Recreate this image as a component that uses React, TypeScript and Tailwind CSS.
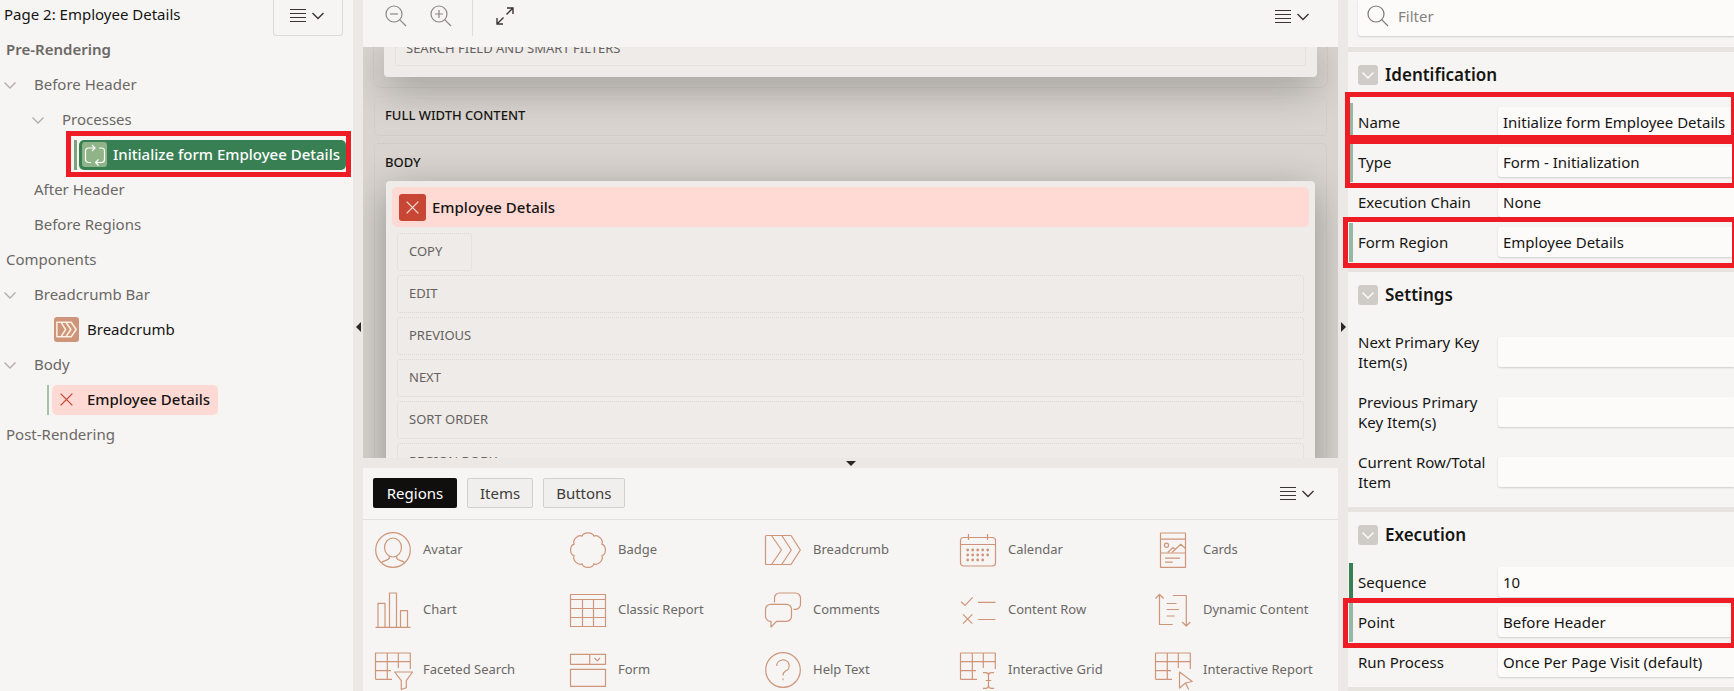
import { ReactNode } from "react";

type IconProps = { className?: string };

function MenuIcon() {
  return (
    <svg className="h-4 w-9" viewBox="0 0 36 16" fill="none" stroke="#3a3632" aria-hidden="true">
      <path d="M0 2.5H16M0 6.5H16M0 10.5H16M0 14.5H16" />
      <path d="M22.5 6L28 11.5L33.5 6" strokeWidth="1.4" />
    </svg>
  );
}

function Chevron({ className = "" }: IconProps) {
  return (
    <svg className={`h-3 w-3 ${className}`} viewBox="0 0 12 12" fill="none" stroke="currentColor" strokeWidth="1.3" aria-hidden="true">
      <path d="M.5 3.5L6 9L11.5 3.5" />
    </svg>
  );
}

function Magnifier({ sign = "" }: { sign?: string }) {
  return (
    <svg className="h-6 w-6" viewBox="0 0 24 24" fill="none" stroke="currentColor" strokeWidth="1.2" aria-hidden="true">
      <circle cx="10" cy="10" r="8" />
      <path d="M15.7 15.7L22 22" />
      {sign && <path d={sign} />}
    </svg>
  );
}

function Cross({ className = "" }: IconProps) {
  return (
    <svg className={className} viewBox="0 0 14 14" fill="none" stroke="currentColor" strokeWidth="1.4" aria-hidden="true">
      <path d="M.7 .7L13.3 13.3M13.3 .7L.7 13.3" />
    </svg>
  );
}

/* Tree */

type TreeNode = {
  label: string;
  indent: string;
  expandable?: boolean;
  kind?: "process" | "breadcrumb" | "invalid";
  className?: string;
};

const tree: TreeNode[] = [
  { label: "Pre-Rendering", indent: "pl-1.5", className: "font-semibold" },
  { label: "Before Header", indent: "pl-1", expandable: true },
  { label: "Processes", indent: "pl-8", expandable: true },
  { label: "Initialize form Employee Details", indent: "pl-[74px]", kind: "process" },
  { label: "After Header", indent: "pl-[34px]" },
  { label: "Before Regions", indent: "pl-[34px]" },
  { label: "Components", indent: "pl-1.5" },
  { label: "Breadcrumb Bar", indent: "pl-1", expandable: true },
  { label: "Breadcrumb", indent: "pl-[54px]", kind: "breadcrumb" },
  { label: "Body", indent: "pl-1", expandable: true },
  { label: "Employee Details", indent: "pl-[47px]", kind: "invalid" },
  { label: "Post-Rendering", indent: "pl-1.5" },
];

function TreeLabel({ node }: { node: TreeNode }) {
  if (node.kind === "process") {
    return (
      <>
        <span className="mr-0.5 h-[30px] w-[3px] shrink-0 bg-[#7ba37c]" />
        <button className="flex h-[30px] items-center gap-1.5 rounded-[5px] bg-[#387f54] pl-[3px] pr-1.5 font-medium text-white">
          <span className="flex h-[25px] w-[25px] shrink-0 items-center justify-center rounded-[3px] bg-[#8fb488]">
            <svg className="h-[22px] w-[22px]" viewBox="0 0 22 22" fill="none" stroke="#fff" strokeWidth="1.2" aria-hidden="true">
              <path d="M7 18.5H4.5A3 3 0 0 1 1.5 15.5V7A3 3 0 0 1 4.5 4H10.5M8 1L11 4L8 7" />
              <path d="M15 4H17.5A3 3 0 0 1 20.5 7V15.5A3 3 0 0 1 17.5 18.5H12M14.5 15.5L11.5 18.5L14.5 21.5" />
            </svg>
          </span>
          {node.label}
        </button>
        <span className="pointer-events-none absolute -bottom-[5px] -top-[6px] left-[66px] right-0.5 border-[5px] border-[#ee1c25]" />
      </>
    );
  }
  if (node.kind === "breadcrumb") {
    return (
      <button className="flex items-center gap-2 text-[#161513]">
        <span className="flex h-[25px] w-[25px] items-center justify-center rounded-[3px] bg-[#ce957b]">
          <svg className="h-[21px] w-[21px]" viewBox="0 0 36 36" fill="none" stroke="#faf0e0" strokeWidth="2.6" strokeLinejoin="round" aria-hidden="true">
            <path d="M1.5 5.5H26L34.5 18L26 30.5H1.5ZM8.5 5.5L16.5 18L8.5 30.5M17 5.5L25.5 18L17 30.5" />
          </svg>
        </span>
        {node.label}
      </button>
    );
  }
  if (node.kind === "invalid") {
    return (
      <>
        <span className="mr-[3px] h-[30px] w-0.5 shrink-0 bg-[#a5c2a3]" />
        <button className="flex h-[30px] items-center gap-[14px] rounded-[5px] bg-[#ffd9d3] px-2 font-medium text-[#161513]">
          <Cross className="h-[13px] w-[13px] text-[#c74634]" />
          {node.label}
        </button>
      </>
    );
  }
  return (
    <button className={`flex items-center ${node.expandable ? "gap-[18px]" : ""} ${node.className ?? ""}`}>
      {node.expandable && <Chevron className="text-[#b0ada9]" />}
      {node.label}
    </button>
  );
}

function TreePanel() {
  return (
    <aside className="w-[353px] shrink-0 overflow-hidden bg-[#f6f5f3]">
      <header className="flex h-8 items-start justify-between pl-1 pr-[10px]">
        <h1 className="pt-1 leading-5 text-[#161513]">Page 2: Employee Details</h1>
        <button
          aria-label="Page menu"
          className="flex h-9 w-[70px] shrink-0 items-center justify-center rounded-b-[3px] border border-t-0 border-[#dcdad7] pb-1.5"
        >
          <MenuIcon />
        </button>
      </header>
      <ul className="text-[#6b6865]">
        {tree.map((node) => (
          <li key={node.label} className={`relative flex h-[35px] items-center whitespace-nowrap ${node.indent}`}>
            <TreeLabel node={node} />
          </li>
        ))}
      </ul>
    </aside>
  );
}

/* Layout canvas */

function Slot({ label, className = "" }: { label: string; className?: string }) {
  return (
    <div className={`flex h-[38px] shrink-0 items-center rounded-[3px] border border-dotted border-[#dbd8d5] pl-[11px] text-[13px] text-[#65625f] ${className}`}>
      {label}
    </div>
  );
}

function Canvas() {
  return (
    <div className="flex min-h-0 flex-1 flex-col overflow-hidden bg-[#d9d4cf] px-[10px]">
      <div className="shrink-0 rounded-b-lg border border-t-0 border-dotted border-[#c9c5c0] px-[10px] pb-[10px]">
        <div className="h-[30px] rounded-b-[4px] bg-[#efebe8] px-[11px] shadow-[0_10px_40px_rgba(0,0,0,0.32)]">
          <div className="flex h-[19px] flex-col justify-end overflow-hidden rounded-b-[3px] border border-t-0 border-dotted border-[#dbd8d5] pb-1.5 pl-[10px] text-[13px] leading-[22px] text-[#65625f]">
            SEARCH FIELD AND SMART FILTERS
          </div>
        </div>
      </div>
      <section className="mx-px mt-2 flex h-10 shrink-0 items-center rounded-[5px] border border-dotted border-[#c9c5c0] pl-[10px] text-[13px] font-medium text-[#161513]">
        FULL WIDTH CONTENT
      </section>
      <section className="mx-px mt-[7px] rounded-t-[5px] border border-b-0 border-dotted border-[#c9c5c0] px-[11px]">
        <h2 className="-ml-px flex h-[37px] items-center text-[13px] font-medium text-[#161513]">BODY</h2>
        <div className="flex flex-col rounded-t-[4px] bg-[#efebe8] p-1.5 shadow-[0_10px_40px_rgba(0,0,0,0.32)]">
          <div className="flex h-10 items-center gap-1.5 rounded-[5px] bg-[#ffd9d3] pl-[7px] font-medium text-[#161513]">
            <span className="flex h-[27px] w-[27px] items-center justify-center rounded-[3px] bg-[#c74634]">
              <Cross className="h-[13px] w-[13px] text-[#ffdcd6]" />
            </span>
            Employee Details
          </div>
          <div className="mt-1.5 flex flex-col gap-1 px-[5px]">
            <Slot label="COPY" className="w-[75px]" />
            <Slot label="EDIT" />
            <Slot label="PREVIOUS" />
            <Slot label="NEXT" />
            <Slot label="SORT ORDER" />
            <Slot label="REGION BODY" />
          </div>
        </div>
      </section>
    </div>
  );
}

/* Gallery */

const grid = "M.5 27.3V1H35.3V17M.5 9.7H35.3M.5 18.7H16M.5 27.3H17M12.3 1V27.3M23.3 1V16";

const gallery: { label: string; icon: ReactNode }[] = [
  {
    label: "Avatar",
    icon: (
      <>
        <circle cx="18" cy="18" r="17.3" />
        <ellipse cx="18" cy="15.5" rx="8.5" ry="9.5" />
        <path d="M6.5 30.5C8 28.5 14.3 28.5 14.3 26V24M29.5 30.5C28 28.5 21.7 28.5 21.7 26V24" />
      </>
    ),
  },
  {
    label: "Badge",
    icon: (
      <path d="M12.2 4.2C13.5 -.2 22.5 -.2 23.8 4.2C27.9 2 34 8.1 31.8 12.2C36.6 13.5 36.6 22.5 31.8 23.8C34 27.9 27.9 34 23.8 31.8C22.5 36.6 13.5 36.6 12.2 31.8C8.1 34 2 27.9 4.2 23.8C-.6 22.5 -.6 13.5 4.2 12.2C2 8.1 8.1 2 12.2 4.2Z" />
    ),
  },
  {
    label: "Breadcrumb",
    icon: <path d="M1.5 3.5H26L35.3 18L26 32.5H1.5Q.5 32.5 .5 31.5V4.5Q.5 3.5 1.5 3.5ZM6.5 3.5L16.5 18L6.5 32.5M16.7 3.5L26.3 18L16.7 32.5" />,
  },
  {
    label: "Calendar",
    icon: (
      <>
        <rect x=".5" y="5.5" width="35" height="28.5" rx="3" />
        <path d="M.5 12.5H35.5M8.5 2V8M27.5 2V8" />
        <path d="M7.7 18H28M7.7 23H28M7.7 28H23" strokeWidth="2.8" strokeLinecap="round" strokeDasharray="0 5" />
      </>
    ),
  },
  {
    label: "Cards",
    icon: (
      <>
        <path d="M5.5 1H30.5V35.3H5.5ZM5.5 7.2H30.5M5.5 21H30.5M10 26.2H25M10 30.2H17.7" />
        <circle cx="11.5" cy="13.3" r="2.1" />
        <path d="M12.7 20.5L18 15.5L20 17.5M17 20.5L25.7 12.3L30.5 16.5" />
      </>
    ),
  },
  {
    label: "Chart",
    icon: <path d="M.5 35.3H35.5M3 35V11.3H10V35M14.5 35V1H21.5V35M25.5 35V18.7H32.5V35" />,
  },
  {
    label: "Classic Report",
    icon: <path d="M.5 2.5H35.5V34.5H.5ZM.5 7.5H35.5M.5 16.5H35.5M.5 25.5H35.5M12.5 7.5V34.5M23.5 7.5V34.5" />,
  },
  {
    label: "Comments",
    icon: (
      <>
        <path d="M9.5 10.5V6A5 5 0 0 1 14.5 1H30.5A5 5 0 0 1 35.5 6V12A5 5 0 0 1 30.5 17.3H28.5" />
        <path d="M5.5 12.3H21.5A5 5 0 0 1 26.5 17.3V24A5 5 0 0 1 21.5 29.3H11.5L6 35V29.3A5 5 0 0 1 .5 24V17.3A5 5 0 0 1 5.5 12.3Z" />
      </>
    ),
  },
  {
    label: "Content Row",
    icon: <path d="M1 9.7L5 13.3L12.7 5.3M18 10.3H35.5M3 22.3L12.3 31.7M12.3 22.3L3 31.7M18 27.5H35.5" />,
  },
  {
    label: "Dynamic Content",
    icon: <path d="M.5 6.5L4.5 2.5L8.7 6.5M4.5 2.5V32.5H17.7M17.7 3.5H31.3V34M27.2 30L31.3 34L35.3 30M11.7 11.5H21.5M11.7 17.5H24M11.7 24H19.7" />,
  },
  {
    label: "Faceted Search",
    icon: (
      <>
        <path d={grid} />
        <path d="M19.7 20H37.5L31.3 28.7V35.7L26.3 37.5V28.7Z" />
      </>
    ),
  },
  {
    label: "Form",
    icon: <path d="M.5 2.3H35.5V12.3H.5ZM19.7 2.3V12.3M24.5 6L27.3 8.8L30 6M.5 17.3H35.5V34.3H.5Z" />,
  },
  {
    label: "Help Text",
    icon: (
      <>
        <circle cx="18" cy="18" r="17.3" />
        <path d="M11.8 14A6.2 5.8 0 1 1 20.5 19Q18 20.5 18 23.5M18 26.5V28.3" />
      </>
    ),
  },
  {
    label: "Interactive Grid",
    icon: (
      <>
        <path d={grid} />
        <path d="M23 20.7H25.5Q28.5 20.7 28.5 23.5V33.5Q28.5 36.3 25.5 36.3H23M34 20.7H31.5Q28.5 20.7 28.5 23.5M34 36.3H31.5Q28.5 36.3 28.5 33.5M25.8 28.5H31.2" />
      </>
    ),
  },
  {
    label: "Interactive Report",
    icon: (
      <>
        <path d={grid} />
        <path d="M33.7 37.5L30.5 31L24.5 36V20L37.3 29.5L30.5 31" />
      </>
    ),
  },
];

function Gallery() {
  return (
    <section className="h-[223px] shrink-0 overflow-hidden bg-[#f6f5f3]">
      <div className="flex h-[52px] items-center justify-between border-b border-[#e3e1de] pb-px pl-[10px] pr-[22px]">
        <div className="flex gap-[10px]" role="tablist">
          <button role="tab" aria-selected="true" className="h-[30px] w-[84px] rounded-[2px] bg-[#100f0d] text-white">
            Regions
          </button>
          {["Items", "Buttons"].map((tab) => (
            <button
              key={tab}
              role="tab"
              aria-selected="false"
              className="h-[30px] rounded-[2px] border border-[#d3d1ce] bg-[#f0efed] px-3 text-[#3f3c39]"
            >
              {tab}
            </button>
          ))}
        </div>
        <button aria-label="Gallery menu">
          <MenuIcon />
        </button>
      </div>
      <ul className="grid grid-cols-5">
        {gallery.map((item) => (
          <li key={item.label} className="flex h-[60px] items-center gap-3 whitespace-nowrap pl-3 text-[13px] text-[#6b6865]">
            <svg className="h-9 w-9 shrink-0 overflow-visible" viewBox="0 0 36 36" fill="none" stroke="#cf957a" strokeWidth="1.2" strokeLinejoin="round" aria-hidden="true">
              {item.icon}
            </svg>
            {item.label}
          </li>
        ))}
      </ul>
    </section>
  );
}

function CenterPanel() {
  return (
    <main className="flex min-w-0 flex-1 flex-col">
      <div className="flex h-[47px] shrink-0 items-start justify-between bg-[#f6f5f3] pl-[21px] pr-[27px]">
        <div className="flex h-9 items-start text-[#8b8885]">
          <button aria-label="Zoom out" className="pt-1">
            <Magnifier sign="M6 10H14" />
          </button>
          <button aria-label="Zoom in" className="ml-[21px] pt-1">
            <Magnifier sign="M6 10H14M10 6V14" />
          </button>
          <span className="ml-[19px] h-9 w-px bg-[#dedcda]" />
          <button aria-label="Expand" className="ml-[23px] pt-[7px] text-[#3a3632]">
            <svg className="h-[18px] w-[18px]" viewBox="0 0 18 18" fill="none" stroke="currentColor" strokeWidth="1.4" aria-hidden="true">
              <path d="M10.5 7.5L17 1M11 1H17V7M7.5 10.5L1 17M1 11V17H7" />
            </svg>
          </button>
        </div>
        <button aria-label="Layout menu" className="mt-2">
          <MenuIcon />
        </button>
      </div>
      <Canvas />
      <div className="flex h-[10px] shrink-0 items-center justify-center bg-[#ece8e5]">
        <span className="border-x-[5px] border-t-[5px] border-x-transparent border-t-[#2a2724]" />
      </div>
      <Gallery />
    </main>
  );
}

/* Property editor */

type Property = {
  label: string;
  value: string;
  type?: "text" | "select";
  tall?: boolean;
  bar?: string;
  outline?: string;
};

const identification: Property[] = [
  { label: "Name", value: "Initialize form Employee Details", bar: "bg-[#96b8a2]", outline: "-top-[10px] bottom-0.5 -left-[3px] -right-0.5" },
  { label: "Type", value: "Form - Initialization", type: "select", bar: "bg-[#96b8a2]", outline: "-top-[3px] -bottom-1.5 -left-[3px] -right-[3px]" },
  { label: "Execution Chain", value: "None", type: "select" },
  { label: "Form Region", value: "Employee Details", type: "select", bar: "bg-[#96b8a2]", outline: "-top-[5px] -bottom-1.5 -left-[5px] -right-[3px]" },
];

const settings: Property[] = [
  { label: "Next Primary Key Item(s)", value: "", tall: true },
  { label: "Previous Primary Key Item(s)", value: "", tall: true },
  { label: "Current Row/Total Item", value: "", tall: true },
];

const execution: Property[] = [
  { label: "Sequence", value: "10", bar: "bg-[#387f54]" },
  { label: "Point", value: "Before Header", type: "select", bar: "bg-[#96b8a2]", outline: "-top-1 -bottom-1.5 -left-[5px] -right-0.5" },
  { label: "Run Process", value: "Once Per Page Visit (default)", type: "select" },
];

const fieldClass =
  "h-[30px] w-full min-w-0 flex-1 appearance-none rounded-l-[3px] bg-[#fcfbfa] px-[5px] text-[#161513] shadow-[0_1px_2px_rgba(0,0,0,0.16)] outline-none";

function PropertyRow({ property }: { property: Property }) {
  const id = property.label.toLowerCase().replace(/[^a-z]+/g, "-");
  return (
    <div className={`relative flex items-center pl-[10px] ${property.tall ? "h-[60px]" : "h-10"}`}>
      {property.bar && <span className={`absolute bottom-0 left-px top-px w-1 ${property.bar}`} />}
      <label htmlFor={id} className="w-[140px] shrink-0 pr-2 leading-5 text-[#161513]">
        {property.label}
      </label>
      {property.type === "select" ? (
        <select id={id} className={fieldClass} defaultValue={property.value}>
          <option>{property.value}</option>
        </select>
      ) : (
        <input id={id} type="text" className={fieldClass} defaultValue={property.value} />
      )}
      {property.outline && (
        <span className={`pointer-events-none absolute z-10 border-[5px] border-[#ee1c25] ${property.outline}`} />
      )}
    </div>
  );
}

function PropertyGroup({ title, properties }: { title: string; properties: Property[] }) {
  return (
    <section className="border-t-[5px] border-[#e7e3df] pb-[5px]">
      <h2 className="flex h-[50px] items-center gap-[7px] pb-1 pl-[10px] text-[17px] font-semibold text-[#161513]">
        <button aria-label={`Collapse ${title}`} className="flex h-5 w-5 items-center justify-center rounded-[3px] bg-[#cfcbc6] text-white">
          <Chevron />
        </button>
        {title}
      </h2>
      {properties.map((property) => (
        <PropertyRow key={property.label} property={property} />
      ))}
    </section>
  );
}

function PropertyPanel() {
  return (
    <aside className="w-[386px] shrink-0 bg-[#f6f5f3]">
      <div className="h-[47px] pl-[10px]">
        <label className="flex h-9 items-start gap-2 rounded-bl-[3px] bg-[#fcfbfa] pl-2 text-[#7a7774] shadow-[0_1px_2px_rgba(0,0,0,0.16)]">
          <span className="pt-1">
            <Magnifier />
          </span>
          <input
            type="search"
            aria-label="Filter properties"
            placeholder="Filter"
            className="h-8 min-w-0 flex-1 bg-transparent outline-none placeholder:text-[#85827e]"
          />
        </label>
      </div>
      <PropertyGroup title="Identification" properties={identification} />
      <PropertyGroup title="Settings" properties={settings} />
      <PropertyGroup title="Execution" properties={execution} />
      <div className="h-[5px] bg-[#e7e3df]" />
    </aside>
  );
}

export default function App() {
  return (
    <div className="flex h-screen overflow-hidden bg-[#ece8e5] font-['Noto_Sans',sans-serif] text-[15px]">
      <TreePanel />
      <div className="flex w-[10px] shrink-0 items-center justify-center pb-[37px]">
        <span className="border-y-[5px] border-r-[5px] border-y-transparent border-r-[#2a2724]" />
      </div>
      <CenterPanel />
      <div className="flex w-[10px] shrink-0 items-center justify-center pb-[37px]">
        <span className="border-y-[5px] border-l-[5px] border-y-transparent border-l-[#2a2724]" />
      </div>
      <PropertyPanel />
    </div>
  );
}
